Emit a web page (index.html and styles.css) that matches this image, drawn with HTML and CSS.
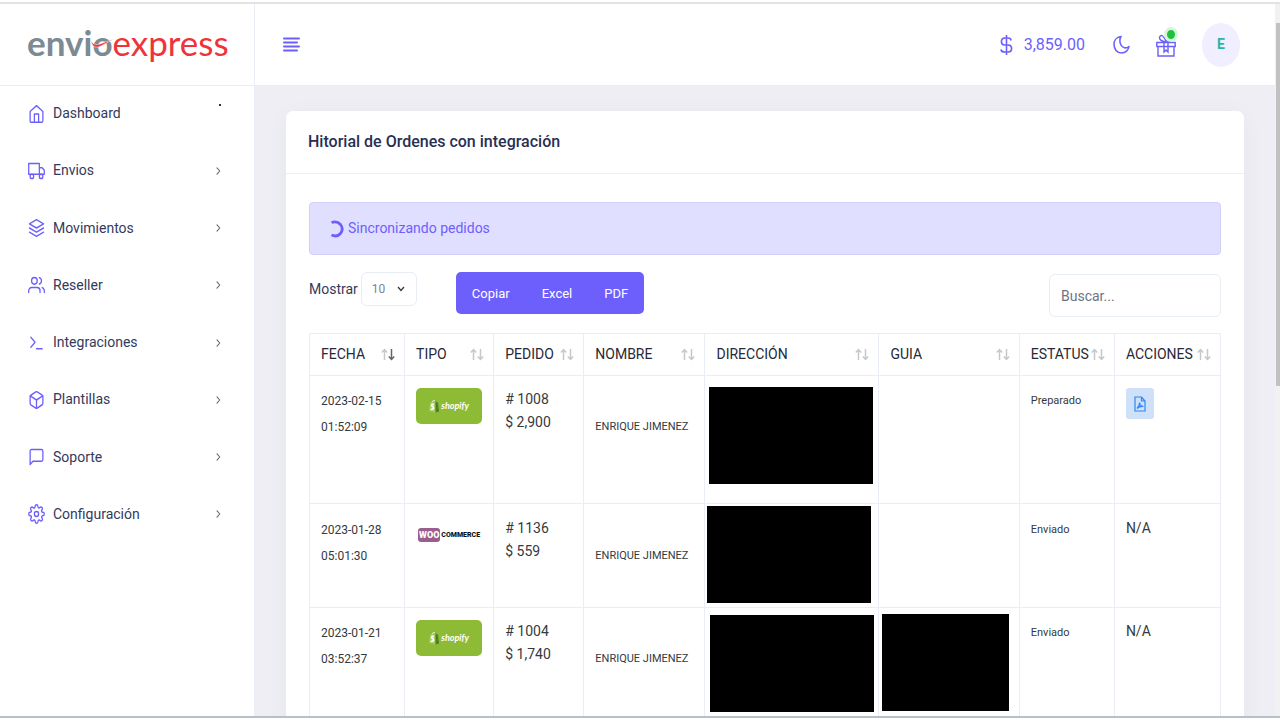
FILE: index.html
```html
<!DOCTYPE html>
<html lang="es">
<head>
<meta charset="utf-8">
<title>Envio Express</title>
<link rel="stylesheet" href="styles.css">
</head>
<body>
<svg class="defs" aria-hidden="true">
  <symbol id="sort" viewBox="0 0 14 13" preserveAspectRatio="none"><path d="M3.500 12V1.500M.8 4.500l2.700-3 2.700 3" fill="none" stroke="#c5c8cc" stroke-width="1.500"/><path d="M10.500 1v10.500M7.800 8.500l2.700 3 2.700-3" fill="none" stroke-width="1.500"/></symbol>
  <symbol id="chev" viewBox="0 0 5 8"><path d="M1 .8 3.800 4 1 7.200" fill="none" stroke="#666679" stroke-width="1.100"/></symbol>
  <symbol id="bag" viewBox="0 0 10 14"><path d="M1 3.500 6.500 2v11.500L0 12z" fill="#a5cc67"/><path d="M6.500 2 9 4l1 8.500-3.500 1z" fill="#4f7f1e"/><path d="M3 3.500Q4 .3 6 1.500" fill="none" stroke="#dcebc6"/><path d="M5 5.500Q2.500 5 2.600 6.700 5 8 4.500 9.500 3.500 11 1.800 9.800" fill="none" stroke="#fff" stroke-width="1.600"/></symbol>
</svg>
<div class="window">
  <aside class="sidebar">
    <a class="brand" href="#" aria-label="envioexpress">
      <span class="brand-a">envio</span><span class="brand-b">express</span>
      <svg class="swoosh" viewBox="0 0 24 12"><path d="M0 3Q2 12 10 8L23 1Q14 4 9 6 3 8 0 3z" fill="#f03338" stroke="#fff" stroke-width=".5"/></svg>
    </a>
    <nav class="menu">
      <a href="#"><svg viewBox="0 0 24 24" preserveAspectRatio="none"><path d="M3 9l9-7 9 7v11a2 2 0 0 1-2 2H5a2 2 0 0 1-2-2z"/><path d="M9 22V12h6v10"/></svg><span>Dashboard</span><i class="dot"></i></a>
      <a href="#"><svg viewBox="0 0 24 24" preserveAspectRatio="none"><path d="M1 3h15v13H1zM16 8h4l3 3v5h-7z"/><circle cx="5.500" cy="18.500" r="2.500"/><circle cx="18.500" cy="18.500" r="2.500"/></svg><span>Envios</span><svg class="chev"><use href="#chev"/></svg></a>
      <a href="#"><svg viewBox="0 0 24 24" preserveAspectRatio="none"><path d="M12 2 2 7l10 5 10-5zM2 17l10 5 10-5M2 12l10 5 10-5"/></svg><span>Movimientos</span><svg class="chev"><use href="#chev"/></svg></a>
      <a href="#"><svg viewBox="0 0 24 24" preserveAspectRatio="none"><path d="M17 21v-2a4 4 0 0 0-4-4H5a4 4 0 0 0-4 4v2"/><circle cx="9" cy="7" r="4"/><path d="M23 21v-2a4 4 0 0 0-3-3.870M16 3.130a4 4 0 0 1 0 7.750"/></svg><span>Reseller</span><svg class="chev"><use href="#chev"/></svg></a>
      <a href="#"><svg viewBox="0 0 24 24" preserveAspectRatio="none"><path d="M4 17l6-6-6-6M12 19h8"/></svg><span>Integraciones</span><svg class="chev"><use href="#chev"/></svg></a>
      <a href="#"><svg viewBox="0 0 24 24" preserveAspectRatio="none"><path d="M21 16V8a2 2 0 0 0-1-1.730l-7-4a2 2 0 0 0-2 0l-7 4A2 2 0 0 0 3 8v8a2 2 0 0 0 1 1.730l7 4a2 2 0 0 0 2 0l7-4A2 2 0 0 0 21 16z"/><path d="M3.270 6.960 12 12l8.730-5.040M12 22V12"/></svg><span>Plantillas</span><svg class="chev"><use href="#chev"/></svg></a>
      <a href="#"><svg viewBox="0 0 24 24" preserveAspectRatio="none"><path d="M21 15a2 2 0 0 1-2 2H7l-4 4V5a2 2 0 0 1 2-2h14a2 2 0 0 1 2 2z"/></svg><span>Soporte</span><svg class="chev"><use href="#chev"/></svg></a>
      <a href="#"><svg viewBox="0 0 24 24" preserveAspectRatio="none"><circle cx="12" cy="12" r="3"/><path d="M19.400 15a1.650 1.650 0 0 0 .33 1.820l.06.06a2 2 0 1 1-2.830 2.830l-.06-.06a1.650 1.650 0 0 0-2.800 1.170V21a2 2 0 0 1-4 0v-.09A1.650 1.650 0 0 0 7.200 19.700l-.06.06a2 2 0 1 1-2.830-2.830l.06-.06A1.650 1.650 0 0 0 3.200 14H3a2 2 0 0 1 0-4h.09A1.650 1.650 0 0 0 4.300 7.200l-.06-.06a2 2 0 1 1 2.830-2.830l.06.06A1.650 1.650 0 0 0 10 3.200V3a2 2 0 0 1 4 0v.09a1.650 1.650 0 0 0 2.800 1.200l.06-.06a2 2 0 1 1 2.830 2.830l-.06.06A1.650 1.650 0 0 0 20.800 10H21a2 2 0 0 1 0 4h-.09a1.650 1.650 0 0 0-1.510 1z"/></svg><span>Configuración</span><svg class="chev"><use href="#chev"/></svg></a>
    </nav>
  </aside>
  <div class="page">
    <header class="topbar">
      <button class="icon-btn" aria-label="Menú"><svg width="17" height="15" viewBox="0 0 17 15"><path d="M1 1.500h15M1 5.500h13M1 9.500h15M1 13.500h13" stroke="#6c5ffc" stroke-width="2" stroke-linecap="round"/></svg></button>
      <div class="tools">
        <span class="balance"><svg width="13" height="22" viewBox="0 0 14 22" preserveAspectRatio="none"><path d="M7 1v20M12 6.500Q11.500 4 9 4H5Q1.500 4.200 1.500 7.500T5 11h4q3.500.2 3.500 3.500T9 18H5q-3.500 0-4-2.500" fill="none" stroke="#6c5ffc" stroke-width="1.700"/></svg>3,859.00</span>
        <button class="icon-btn" aria-label="Modo oscuro"><svg width="17" height="20" viewBox="0 0 17 20"><path d="M8 1.500C3 2 1 6 1 9.500 1 14 4 18 8.500 18 12.500 18 15.500 15 16 11.500 13 14 9.500 13 8 10 6.500 7 6.500 4 8 1.500z" fill="none" stroke="#6c5ffc" stroke-width="1.600" stroke-linejoin="round"/></svg></button>
        <button class="icon-btn gift" aria-label="Regalos"><svg width="20" height="24" viewBox="0 0 20 24"><g fill="none" stroke="#6c5ffc" stroke-width="1.400"><path d="M.8 9.500h18.400v4H.8zM2 13.500V23h16v-9.500M8 9.500V19l2-2 2 2V9.500M10 9Q3 8 3.500 4 6-.5 10 8M10 9q6-.5 6-4-2.500-3-6 3"/></g></svg><i class="badge"></i></button>
        <button class="avatar">E</button>
      </div>
    </header>
    <main class="content">
      <section class="card">
        <h1>Hitorial de Ordenes con integración</h1>
        <div class="card-body">
          <div class="alert" role="status"><svg width="14" height="18" viewBox="0 0 14 18"><path d="M1.500 2.500Q7 .5 10.500 4.500 14 9 10.500 13.500 7 17.500 1.500 15" fill="none" stroke="#6c5ffc" stroke-width="2.800"/></svg>Sincronizando pedidos</div>
          <div class="controls">
            <label class="length">Mostrar
              <select><option>10</option><option>25</option><option>50</option></select></label>
            <div class="exports"><button>Copiar</button><button>Excel</button><button>PDF</button></div>
            <input class="search" type="search" placeholder="Buscar..." aria-label="Buscar">
          </div>
          <table>
            <colgroup><col class="c-fecha"><col class="c-tipo"><col class="c-pedido"><col class="c-nombre"><col class="c-dir"><col class="c-guia"><col class="c-estatus"><col class="c-acc"></colgroup>
            <thead><tr>
              <th><div>FECHA<svg class="sort desc"><use href="#sort"/></svg></div></th>
              <th><div>TIPO<svg class="sort"><use href="#sort"/></svg></div></th>
              <th><div>PEDIDO<svg class="sort"><use href="#sort"/></svg></div></th>
              <th><div>NOMBRE<svg class="sort"><use href="#sort"/></svg></div></th>
              <th><div>DIRECCIÓN<svg class="sort"><use href="#sort"/></svg></div></th>
              <th><div>GUIA<svg class="sort"><use href="#sort"/></svg></div></th>
              <th><div>ESTATUS<svg class="sort"><use href="#sort"/></svg></div></th>
              <th><div>ACCIONES<svg class="sort"><use href="#sort"/></svg></div></th>
            </tr></thead>
            <tbody>
              <tr class="tall">
                <td class="small">2023-02-15<br>01:52:09</td>
                <td><span class="shopify"><svg width="10" height="14"><use href="#bag"/></svg>shopify</span></td>
                <td># 1008<br>$ 2,900</td>
                <td class="small name"><br>ENRIQUE JIMENEZ</td>
                <td class="masked"><div class="mask mask-a"></div></td>
                <td></td>
                <td class="small name">Preparado</td>
                <td><button class="pdf" aria-label="PDF"><svg width="12" height="16" viewBox="0 0 12 16"><g fill="none" stroke="#2f86f6" stroke-width="1.200"><path d="M1 1h6.500L11 5v10H1zM7.500 1v4H11M3 12.500Q6 10 5.500 6.500 6 10 9.500 10.500 6 10 3 12.500z"/></g></svg></button></td>
              </tr>
              <tr>
                <td class="small">2023-01-28<br>05:01:30</td>
                <td><span class="woo"><b>WOO</b>COMMERCE</span></td>
                <td># 1136<br>$ 559</td>
                <td class="small name"><br>ENRIQUE JIMENEZ</td>
                <td class="masked"><div class="mask mask-b"></div></td>
                <td></td>
                <td class="small name">Enviado</td>
                <td>N/A</td>
              </tr>
              <tr class="tall">
                <td class="small">2023-01-21<br>03:52:37</td>
                <td><span class="shopify"><svg width="10" height="14"><use href="#bag"/></svg>shopify</span></td>
                <td># 1004<br>$ 1,740</td>
                <td class="small name"><br>ENRIQUE JIMENEZ</td>
                <td class="masked"><div class="mask mask-c"></div></td>
                <td class="masked"><div class="mask mask-d"></div></td>
                <td class="small name">Enviado</td>
                <td>N/A</td>
              </tr>
            </tbody>
          </table>
        </div>
      </section>
    </main>
  </div>
  <div class="scroll"><div class="thumb"></div></div>
</div>
</body>
</html>
```
FILE: styles.css
```css
* { box-sizing: border-box; }
body { margin: 0; font: 14px/23px Roboto, "Noto Sans", sans-serif; color: #343a5c; background: #fff; }
a { color: inherit; text-decoration: none; }
button, input, select { font: inherit; }
button { border: 0; background: none; padding: 0; cursor: pointer; }
.defs { position: absolute; width: 0; height: 0; }

.window { display: flex; height: calc(100vh - 4px); margin-top: 2px; border-top: 2px solid #e3e3e3; border-bottom: 2px solid #b4c1c8; overflow: hidden; }

.sidebar { flex: 0 0 255px; border-right: 1px solid #e9edf4; background: #fff; }
.brand { position: relative; display: flex; height: 82px; padding: 0 0 6px 27px; align-items: center; border-bottom: 1px solid #e9edf4; font-family: Lato, sans-serif; font-size: 35px; line-height: 40px; }
.brand-a { color: #7c8a93; font-weight: 700; }
.brand-b { color: #f03338; }
.swoosh { position: absolute; left: 91px; top: 34px; width: 24px; height: 12px; }
.menu { display: grid; grid-auto-rows: 1fr; height: 458px; }
.menu a { display: flex; align-items: center; padding: 0 33px 2px 28px; gap: 8px; }
.menu svg { width: 17px; height: 20px; fill: none; stroke: #6c5ffc; stroke-width: 1.8; stroke-linecap: round; stroke-linejoin: round; }
.menu span { flex: 1; }
.menu .chev { width: 5px; height: 8px; }
.dot { width: 2px; height: 2px; margin-bottom: 18px; background: #333; }

.page { flex: 1; min-width: 0; display: flex; flex-direction: column; background: #eeeef4; }
.topbar { flex: 0 0 82px; display: flex; align-items: center; justify-content: space-between; padding: 0 35px 0 28px; background: #fff; border-bottom: 1px solid #e9edf4; }
.icon-btn { display: flex; position: relative; }
.tools { display: flex; align-items: center; color: #6c5ffc; font-size: 16px; }
.balance { display: flex; align-items: center; gap: 11px; margin-right: 28px; }
.gift { margin: 0 26px; }
.badge { position: absolute; right: -2px; top: -6px; width: 14px; height: 15px; border: 3px solid #d6f5d9; border-radius: 50%; background: #1fc13c; }
.avatar { width: 38px; height: 44px; border-radius: 50%; background: #f0eeff; color: #2cb5a0; font-size: 14px; font-weight: 700; }

.content { flex: 1; min-height: 0; padding: 25px 31px 0; }
.card { background: #fff; border-radius: 7px; box-shadow: 0 4px 25px rgba(40, 40, 90, .04); }
.card h1 { margin: 0; padding: 19px 22px 20px; border-bottom: 1px solid #eeeef8; color: #282f53; font-size: 16px; line-height: 23px; font-weight: 500; }
.card-body { padding: 28px 23px; }
.alert { display: flex; align-items: center; gap: 4px; height: 53px; padding: 0 20px; border: 1px solid #d3cffb; border-radius: 4px; background: #e1dfff; color: #6c5ffc; }
.controls { display: flex; align-items: flex-start; padding: 17px 0 16px; }
.length { display: flex; align-items: center; gap: 3px; }
.length select { width: 56px; height: 34px; padding: 0 10px; border: 1px solid #e9edf4; border-radius: 6px; appearance: none; color: #76839a; font-size: 12px; background: url("data:image/svg+xml,%3Csvg xmlns='http://www.w3.org/2000/svg' viewBox='0 0 8 6'%3E%3Cpath d='M1 1l3 3.500L7 1' fill='none' stroke='%23343a40' stroke-width='1.300'/%3E%3C/svg%3E") no-repeat right 11px center / 8px 6px; }
.exports { display: flex; margin-left: 39px; border-radius: 5px; background: #6c5ffc; }
.exports button { height: 42px; padding: 0 16px; color: #fff; font-size: 13px; }
.search { width: 172px; height: 43px; margin: 2px 0 0 auto; padding: 0 11px; border: 1px solid #e9edf4; border-radius: 6px; outline: 0; font-size: 14px; }
.search::placeholder { color: #6b7485; }

table { width: 100%; table-layout: fixed; border-collapse: collapse; color: #343a40; }
th, td { border: 1px solid #e9edf6; padding: 13px 0 0 11px; text-align: left; vertical-align: top; white-space: nowrap; }
.tall td { padding-top: 12px; }
th { height: 42px; padding: 0 9px 0 11px; vertical-align: middle; font-weight: 400; color: #282836; }
th div { display: flex; align-items: center; justify-content: space-between; }
.c-fecha { width: 95px; }
.c-tipo { width: 89px; }
.c-pedido { width: 90px; }
.c-nombre { width: 121px; }
.c-dir { width: 19.1%; }
.c-guia { width: 15.4%; }
.c-estatus { width: 95px; }
.c-acc { width: 106px; }
.sort { width: 14px; height: 13px; stroke: #c5c8cc; flex: none; }
.desc { stroke: #666; }
tbody tr { height: 104px; }
tbody .tall { height: 128px; }
.small { font-size: 12px; line-height: 26px; }
.name { font-size: 11px; }
tbody td.masked { padding: 0; }
.mask { width: 164px; height: 97px; background: #000; }
.mask-a { margin: 11px 0 0 4px; }
.mask-b { margin: 2px 0 0 2px; }
.mask-c { margin: 7px 0 0 5px; }
.mask-d { width: 127px; margin: 6px 0 0 3px; }
.shopify { display: flex; align-items: center; justify-content: center; gap: 2px; width: 66px; height: 36px; border-radius: 5px; background: #8dbb36; color: #fff; font: italic 700 9px/14px Lato, sans-serif; }
.woo { display: flex; align-items: center; gap: 1px; height: 14px; margin: 11px 0 0 2px; color: #111; font-size: 7px; line-height: 14px; font-weight: 900; }
.woo b { padding: 0 1px; border-radius: 3px; background: #9b5c8f; color: #fff; font-size: 9px; font-weight: 900; }
.pdf { display: flex; align-items: center; justify-content: center; width: 28px; height: 31px; border-radius: 3px; background: #cfe1f9; }

.scroll { flex: 0 0 5px; padding: 19px 0 0 1px; background: #f1f1f1; }
.thumb { height: 363px; background: #c1c1c1; }
```
